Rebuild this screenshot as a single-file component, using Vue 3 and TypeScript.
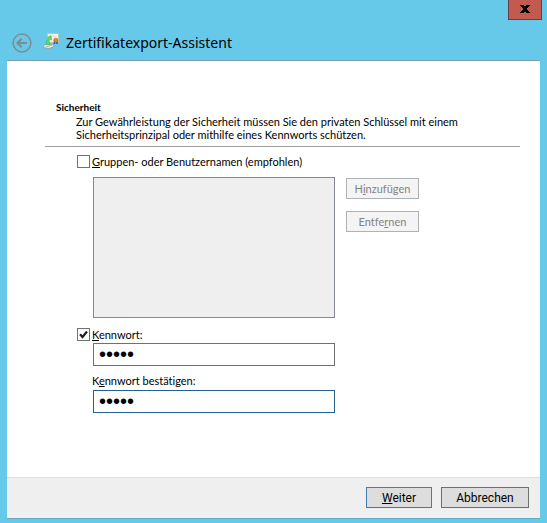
<script setup lang="ts">
import { ref } from 'vue'

const useGroups = ref(false)
const usePassword = ref(true)
const password = ref('aaaaa')
const confirmation = ref('aaaaa')
</script>

<template>
  <main class="window">
    <header class="titlebar">
      <div class="caption">
        <button class="close" type="button" aria-label="Schließen">
          <svg width="10" height="8" viewBox="0 0 10 8" shape-rendering="crispEdges">
            <path d="M0 0h4v1h2V0h4v1H9v1H8v1H7v2h1v1h1v1h1v1H6V7H4v1H0V7h1V6h1V5h1V3H2V2H1V1H0z" fill="#000" />
          </svg>
        </button>
      </div>
      <div class="heading">
        <button class="back" type="button" aria-label="Zurück">
          <svg width="20" height="20" viewBox="0 0 20 20" fill="none" stroke="#7f8c92">
            <circle cx="10" cy="10" r="8.9" stroke-width="1.5" />
            <path d="M15 10H6M9.7 5.8 5.5 10l4.2 4.2" stroke-width="2.2" />
          </svg>
        </button>
        <svg class="cert" width="16" height="16" viewBox="0 0 16 16">
          <path d="M4.5.5h11v9h-11z" fill="#f4efe8" stroke="#cdbfae" />
          <path d="M7 3.5h6" stroke="#e4dfd9" />
          <path d="M.5 13 3 11l8 .5-1 2.5-4 1.5-5.5-1z" fill="#eceeec" stroke="#949c99" stroke-width=".8" />
          <path d="M2.5 13.2h4M6 12.3h3" stroke="#9aa4a0" stroke-width=".8" />
          <path d="M3.2 11.5C3 9 4 6.5 5.5 5.2L4.5 4.5 8 2.5l.5 4.5L7.3 6.3C5.8 8 5.8 9.5 7 11.5z" fill="#5fdc5c" stroke="#2fae3f" stroke-width=".5" />
          <path d="M11.5 8.5v2.5M14 8.5v2.5" stroke="#2456cf" stroke-width="1.6" />
          <circle cx="12.8" cy="7.2" r="2" fill="#d09026" stroke="#91601b" stroke-width=".6" />
        </svg>
        <h1>Zertifikatexport-Assistent</h1>
      </div>
    </header>

    <form class="panel" @submit.prevent>
      <section class="content">
        <div class="intro">
          <h2>Sicherheit</h2>
          <p>Zur Gewährleistung der Sicherheit müssen Sie den privaten Schlüssel mit einem<br />Sicherheitsprinzipal oder mithilfe eines Kennworts schützen.</p>
        </div>

        <div class="fields">
          <div class="check">
            <input id="groups" v-model="useGroups" type="checkbox" />
            <label for="groups"><u>G</u>ruppen- oder Benutzernamen (empfohlen)</label>
          </div>
          <div class="principals">
            <select class="list" size="6" disabled aria-labelledby="groups"></select>
            <div class="actions">
              <button type="button" disabled>H<u>i</u>nzufügen</button>
              <button type="button" disabled>Entfe<u>r</u>nen</button>
            </div>
          </div>
          <div class="check">
            <input id="usePassword" v-model="usePassword" type="checkbox" />
            <label for="usePassword"><u>K</u>ennwort:</label>
          </div>
          <input v-model="password" class="secret" type="password" aria-labelledby="usePassword" />
          <label class="confirm" for="confirmation">K<u>e</u>nnwort bestätigen:</label>
          <input id="confirmation" v-model="confirmation" class="secret active" type="password" />
        </div>
      </section>

      <footer class="footer">
        <button class="primary" type="submit"><u>W</u>eiter</button>
        <button type="button">Abbrechen</button>
      </footer>
    </form>
  </main>
</template>

<style>
body {
  background: #67c9e9;
}
</style>

<style scoped>
* {
  box-sizing: border-box;
}

.window {
  min-height: 100vh;
  padding: 0 7px 4px;
  display: flex;
  flex-direction: column;
  background: #67c9e9;
  color: #000;
  font: 11px/13px Lato, sans-serif;
  font-variant-ligatures: none;
}

button,
input,
select {
  margin: 0;
  font: inherit;
}

u {
  text-decoration: underline;
  text-underline-offset: 1px;
  text-decoration-thickness: 1px;
  text-decoration-skip-ink: none;
}

.caption {
  display: flex;
  justify-content: flex-end;
  margin-right: -2px;
}

.close {
  display: flex;
  align-items: center;
  justify-content: center;
  width: 34px;
  height: 20px;
  padding: 0 0 2px;
  border: 1px solid #6d3c43;
  border-top: 0;
  background: #c35a50;
}

.heading {
  display: flex;
  align-items: center;
  height: 40px;
  padding: 6px 5px 0;
}

.back {
  display: flex;
  padding: 0;
  border: 0;
  background: none;
}

.cert {
  margin: 0 7px 4px 11px;
}

h1 {
  margin: 0;
  font: 14px/20px "Noto Sans", sans-serif;
}

.panel {
  flex: 1;
  display: flex;
  flex-direction: column;
  border-top: 1px solid #7b9fb2;
  border-bottom: 1px solid #64acc8;
  background: #fff;
}

.content {
  flex: 1;
  padding: 40px 20px 40px 38px;
}

.intro {
  padding: 0 0 5px 11px;
  border-bottom: 1px solid #a0a0a0;
}

h2 {
  margin: 0 0 1px;
  font: bold 10px/13px Lato, sans-serif;
}

.intro p {
  margin: 0 0 0 20px;
}

.fields {
  display: flex;
  flex-direction: column;
  padding: 8px 0 0 32px;
}

.check {
  display: flex;
  align-items: center;
  gap: 2px;
}

.check input {
  appearance: none;
  width: 13px;
  height: 13px;
  border: 1px solid #707070;
  background: #fff;
}

.check input:checked {
  background: #fff url("data:image/svg+xml,%3Csvg xmlns='http://www.w3.org/2000/svg' viewBox='0 0 11 11'%3E%3Cpath d='M2 5.3 4.5 8 9 2.5' fill='none' stroke='%23212121' stroke-width='2.2'/%3E%3C/svg%3E");
}

.principals {
  display: flex;
  gap: 11px;
  margin: 9px 0 10px 16px;
}

.list {
  width: 242px;
  height: 141px;
  border: 1px solid #828790;
  border-radius: 0;
  background: #efefef;
  opacity: 1;
}

.actions {
  display: flex;
  flex-direction: column;
  gap: 12px;
  padding-top: 1px;
}

.actions button {
  width: 73px;
  height: 21px;
  padding: 0;
  border: 1px solid #adb2b5;
  background: #f4f4f4;
  color: #838383;
}

.secret {
  width: 242px;
  height: 23px;
  margin: 2px 0 0 16px;
  padding: 0 5px;
  border: 1px solid #707070;
  outline: 0;
  background: #fff;
  color: #000;
  font: 20px/20px "Liberation Sans", sans-serif;
}

.active {
  border-color: #25618f;
}

.confirm {
  margin: 8px 0 1px 15px;
}

.footer {
  display: flex;
  justify-content: flex-end;
  gap: 9px;
  padding: 9px 11px 10px;
  border-top: 1px solid #dfdfdf;
  background: #efefef;
}

.footer button {
  width: 88px;
  height: 21px;
  padding: 2px 0 0;
  border: 1px solid #707070;
  background: #ddd;
  color: #000;
  font: 12px/15px Roboto, sans-serif;
}

.footer .primary {
  width: 66px;
  border-color: #3c7fb1;
}
</style>
